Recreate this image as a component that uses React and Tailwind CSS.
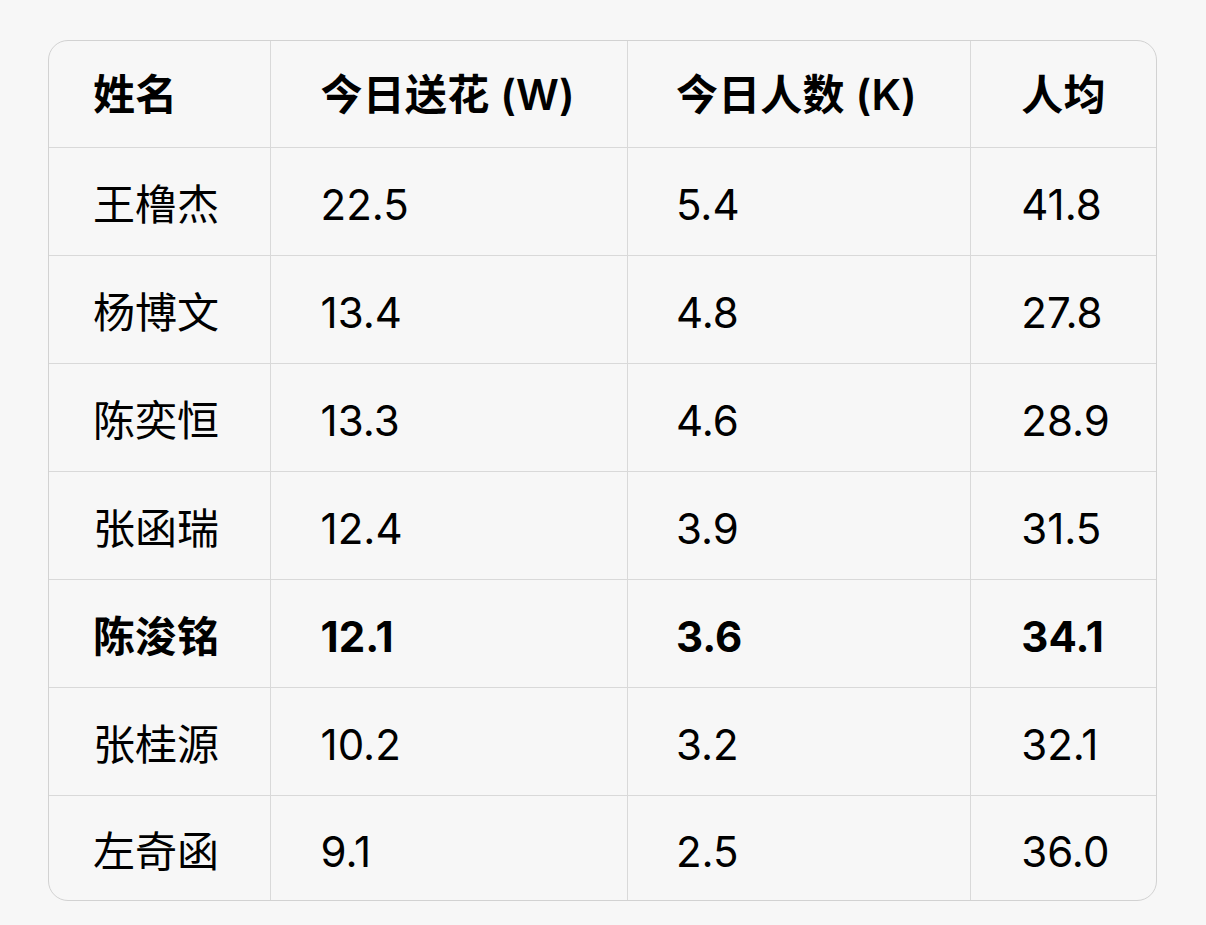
import React from "react";

const rows = [
  ["王橹杰", "22.5", "5.4", "41.8"],
  ["杨博文", "13.4", "4.8", "27.8"],
  ["陈奕恒", "13.3", "4.6", "28.9"],
  ["张函瑞", "12.4", "3.9", "31.5"],
  ["陈浚铭", "12.1", "3.6", "34.1", true],
  ["张桂源", "10.2", "3.2", "32.1"],
  ["左奇函", "9.1", "2.5", "36.0"],
];

const widths = ["w-[222px]", "w-[358px]", "w-[344px]", "w-[185px]"];
const pads = ["pl-[44px]", "pl-[50px]", "pl-[48px]", "pl-[50px]"];

export default function App() {
  return (
    <div
      className="min-h-[925px] w-[1206px] bg-[#f7f7f7] pt-[40px] pl-[48px]"
      style={{ fontFamily: 'Inter, "Noto Sans CJK SC", "Noto Sans", sans-serif' }}
    >
      <div className="w-[1109px] overflow-hidden rounded-[20px] border border-[#d2d2d2] bg-[#f7f7f7]">
        <div className="flex h-[107px] border-b border-[#d9d9d9] text-[42px] font-semibold text-black">
          {["姓名", "今日送花 (W)", "今日人数 (K)", "人均"].map((h, i) => (
            <div
              key={i}
              className={`${widths[i]} ${pads[i]} flex items-center tracking-[0.2px] ${i < 3 ? "border-r border-[#d9d9d9]" : ""}`}
            >
              {h}
            </div>
          ))}
        </div>
        {rows.map((r, ri) => {
          const last = ri === rows.length - 1;
          return (
            <div
              key={ri}
              className={`flex text-[42px] text-black ${last ? "h-[104px]" : "h-[108px] border-b border-[#d9d9d9]"} ${r[4] ? "font-bold" : "font-normal"}`}
            >
              {r.slice(0, 4).map((c, i) => (
                <div
                  key={i}
                  className={`${widths[i]} ${pads[i]} flex items-center pt-[6px] ${i < 3 ? "border-r border-[#d9d9d9]" : ""}`}
                >
                  {c}
                </div>
              ))}
            </div>
          );
        })}
      </div>
    </div>
  );
}
